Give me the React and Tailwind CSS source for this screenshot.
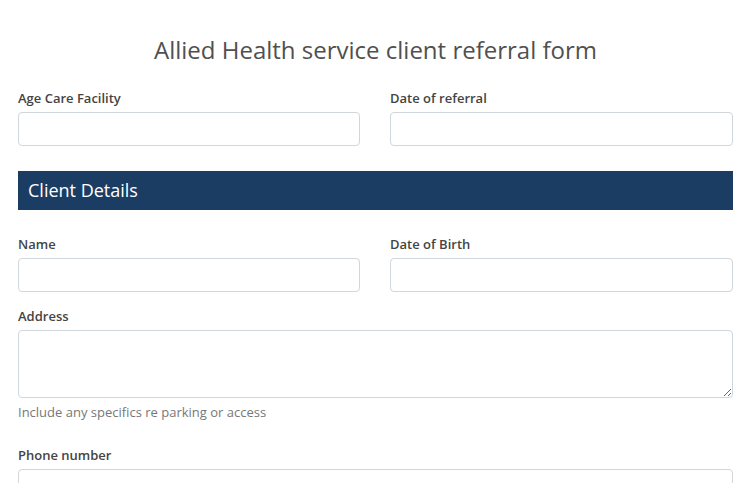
export default function App() {
  const font = { fontFamily: '"Open Sans", "Noto Sans", sans-serif' };
  const label = "block text-[13px] leading-[18px] font-semibold text-[#444]";
  const input = "block w-full h-[34px] mt-[5px] rounded-[4px] border border-[#cfd6dc] bg-white";
  return (
    <div className="min-h-screen bg-white pl-[18px] pr-[16px]" style={font}>
      <h1 className="pt-[34px] text-center text-[24px] leading-[32px] text-[#505050] font-normal">
        Allied Health service client referral form
      </h1>
      <div className="mt-[23px] grid grid-cols-[342px_1fr] gap-x-[30px]">
        <div>
          <label className={label}>Age Care Facility</label>
          <input className={input} />
        </div>
        <div>
          <label className={label}>Date of referral</label>
          <input className={input} />
        </div>
      </div>
      <div className="mt-[25px] h-[39px] bg-[#1b3d63] flex items-center px-[10px]">
        <span className="text-white text-[18px] leading-[24px] -mt-[1px]">Client Details</span>
      </div>
      <div className="mt-[25px] grid grid-cols-[342px_1fr] gap-x-[30px]">
        <div>
          <label className={label}>Name</label>
          <input className={input} />
        </div>
        <div>
          <label className={label}>Date of Birth</label>
          <input className={input} />
        </div>
      </div>
      <div className="mt-[15px]">
        <label className={label}>Address</label>
        <textarea className="block w-full h-[68px] mt-[5px] rounded-[4px] border border-[#cfd6dc] bg-white" />
        <p className="mt-[5px] text-[13px] leading-[18px] text-[#777]">Include any specifics re parking or access</p>
      </div>
      <div className="mt-[25px]">
        <label className={label}>Phone number</label>
        <input className={input} />
      </div>
    </div>
  );
}
